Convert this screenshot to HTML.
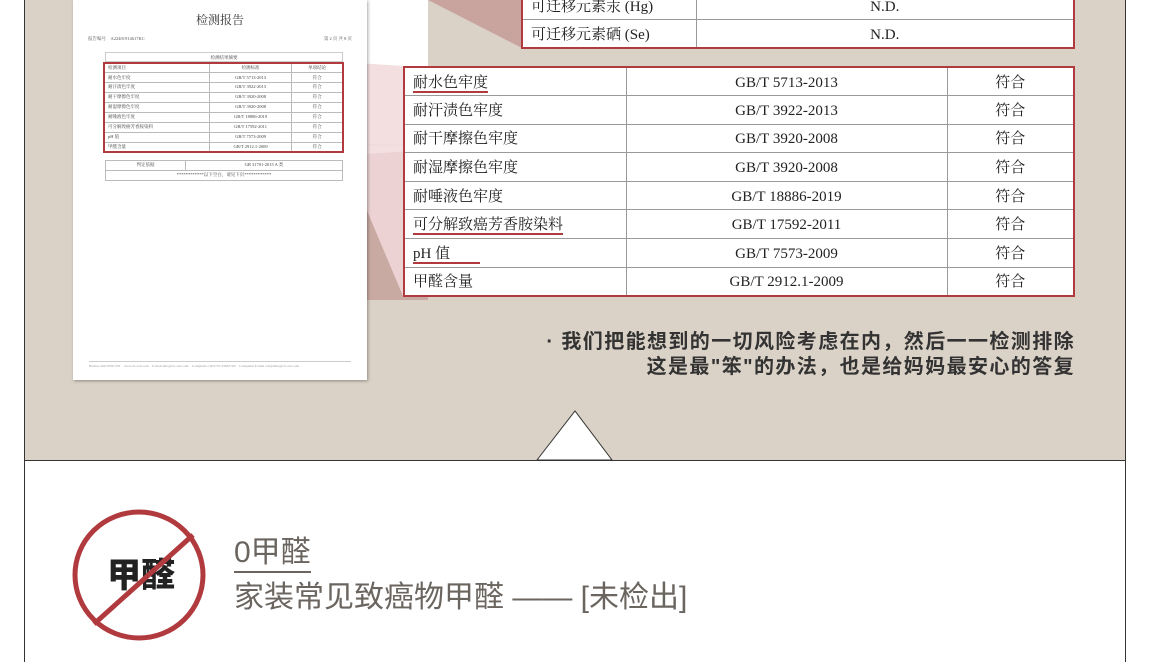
<!DOCTYPE html>
<html><head><meta charset="utf-8"><style>
*{margin:0;padding:0;box-sizing:border-box}
body{width:1150px;height:662px;overflow:hidden;background:#fff;position:relative;font-family:"Liberation Serif","Noto Serif CJK SC",serif}
.abs{position:absolute}
table{border-collapse:collapse;position:absolute}
.t td{border:1px solid #9a9a9a;font-size:15px;color:#222;height:28.6px;padding:2px 8px 0;background:#fff;vertical-align:middle;line-height:18px}
.sans{font-family:"Liberation Sans","Noto Sans CJK SC",sans-serif}
.mini td{border:1px solid #bbb;font-size:4.5px;color:#444;height:9.9px;padding:0 3px;text-align:center;line-height:1}
</style></head><body>
<div class="abs" style="left:24px;top:0;width:1102px;height:461px;background:#dbd2c7;border-left:1px solid #333;border-right:1px solid #333;border-bottom:1px solid #333"></div>
<div class="abs" style="left:24px;top:461px;width:1px;height:201px;background:#333"></div>
<div class="abs" style="left:1125px;top:461px;width:1px;height:201px;background:#333"></div>
<svg class="abs" style="left:0;top:0" width="1150" height="462">
<rect x="360" y="0" width="68" height="156" fill="#fff"/>
<line x1="360" y1="145" x2="428" y2="145" stroke="#ccc" stroke-width="1"/>
<polygon points="428,0 522,0 522,48" fill="#c9a49e"/>
<polygon points="366,154 428,150 428,300 366,300" fill="#c9aaa3"/>
<polygon points="343,62 403,66 403,296 343,154" fill="#f2d9da" opacity="0.85"/>
<polygon points="537,460 575,411 612,460" fill="#fff" stroke="#333" stroke-width="1"/>
</svg>
<div class="abs" style="left:73px;top:0;width:294px;height:380px;background:#fff;box-shadow:1px 1px 3px rgba(0,0,0,.35)">
<div class="abs" style="left:0;top:11px;width:294px;text-align:center;font-size:12px;color:#333">检测报告</div>
<div class="abs" style="left:15px;top:36px;font-size:4.5px;color:#555">报告编号　A22401914617KC</div>
<div class="abs" style="right:15px;top:36px;font-size:4.5px;color:#555">第 2 页 共 8 页</div>
<div class="abs" style="left:32px;top:52px;width:238px;height:10px;border:1px solid #ccc;font-size:4.5px;text-align:center;color:#444;line-height:9px">检测结果摘要</div>
<table class="mini" style="left:30px;top:62px;width:241px;border:2px solid #b03a3e">
<tr><td style="text-align:left">检测项目</td><td>检测标准</td><td>单项结论</td></tr>
<tr><td style="text-align:left">耐水色牢度</td><td>GB/T 5713-2013</td><td>符合</td></tr>
<tr><td style="text-align:left">耐汗渍色牢度</td><td>GB/T 3922-2013</td><td>符合</td></tr>
<tr><td style="text-align:left">耐干摩擦色牢度</td><td>GB/T 3920-2008</td><td>符合</td></tr>
<tr><td style="text-align:left">耐湿摩擦色牢度</td><td>GB/T 3920-2008</td><td>符合</td></tr>
<tr><td style="text-align:left">耐唾液色牢度</td><td>GB/T 18886-2019</td><td>符合</td></tr>
<tr><td style="text-align:left">可分解致癌芳香胺染料</td><td>GB/T 17592-2011</td><td>符合</td></tr>
<tr><td style="text-align:left">pH 值</td><td>GB/T 7573-2009</td><td>符合</td></tr>
<tr><td style="text-align:left">甲醛含量</td><td>GB/T 2912.1-2009</td><td>符合</td></tr>
</table>
<table class="mini" style="left:32px;top:160px;width:238px">
<tr><td style="width:80px">判定依据</td><td>GB 31701-2015 A 类</td></tr>
<tr><td colspan="2">************以下空白，请见下页************</td></tr>
</table>
<div class="abs" style="left:16px;top:361px;width:262px;border-top:1px solid #ccc;font-size:3.5px;color:#999;padding-top:2px;white-space:nowrap">Hotline 400-6700-333　www.ctt-cert.com　E-mail info@ctt-cert.com　Complaint call 0755-33681700　Complaint E-mail complaint@ctt-cert.com</div>
</div>
<table class="t" style="left:521px;top:-10px;width:554px;border:2px solid #b03a3e">
<tr><td style="width:174px">可迁移元素汞 (Hg)</td><td style="text-align:center">N.D.</td></tr>
<tr><td>可迁移元素硒 (Se)</td><td style="text-align:center">N.D.</td></tr>
</table>
<table class="t" style="left:403px;top:66px;width:672px;border:2px solid #b03a3e">
<tr><td style="width:222px"><span style="border-bottom:2px solid #b03a3e">耐水色牢度</span></td><td style="width:321px;text-align:center">GB/T 5713-2013</td><td style="text-align:center">符合</td></tr>
<tr><td>耐汗渍色牢度</td><td style="text-align:center">GB/T 3922-2013</td><td style="text-align:center">符合</td></tr>
<tr><td>耐干摩擦色牢度</td><td style="text-align:center">GB/T 3920-2008</td><td style="text-align:center">符合</td></tr>
<tr><td>耐湿摩擦色牢度</td><td style="text-align:center">GB/T 3920-2008</td><td style="text-align:center">符合</td></tr>
<tr><td>耐唾液色牢度</td><td style="text-align:center">GB/T 18886-2019</td><td style="text-align:center">符合</td></tr>
<tr><td><span style="border-bottom:2px solid #b03a3e">可分解致癌芳香胺染料</span></td><td style="text-align:center">GB/T 17592-2011</td><td style="text-align:center">符合</td></tr>
<tr><td><span style="border-bottom:2px solid #b03a3e;padding-right:30px">pH 值</span></td><td style="text-align:center">GB/T 7573-2009</td><td style="text-align:center">符合</td></tr>
<tr><td>甲醛含量</td><td style="text-align:center">GB/T 2912.1-2009</td><td style="text-align:center">符合</td></tr>
</table>
<div class="abs sans" style="right:75px;top:330px;text-align:right;font-size:20px;letter-spacing:1.4px;font-weight:bold;color:#333;line-height:25px;white-space:nowrap">· 我们把能想到的一切风险考虑在内，然后一一检测排除<br>这是最"笨"的办法，也是给妈妈最安心的答复</div>
<svg class="abs" style="left:70px;top:507px" width="140" height="136">
<ellipse cx="69" cy="68" rx="64" ry="63" fill="none" stroke="#b03a3e" stroke-width="5"/>
<text x="71" y="80" text-anchor="middle" font-family="Noto Sans CJK SC,sans-serif" font-weight="900" font-size="34" fill="#222">甲醛</text>
<line x1="123" y1="28" x2="24" y2="117" stroke="#b03a3e" stroke-width="5"/>
</svg>
<div class="abs sans" style="left:234px;top:535px;font-size:30px;color:#6b6560;line-height:36px;border-bottom:2px solid #6b6560">0甲醛</div>
<div class="abs sans" style="left:234px;top:580px;font-size:30px;color:#6b6560;line-height:36px;white-space:nowrap">家装常见致癌物甲醛 —— [未检出]</div>
</body></html>
